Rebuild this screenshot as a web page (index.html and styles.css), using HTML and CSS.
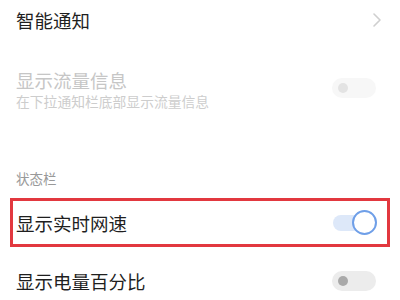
FILE: index.html
```html
<!DOCTYPE html>
<html>
<head>
<meta charset="utf-8">
<link rel="stylesheet" href="styles.css">
</head>
<body>
<div class="page">
  <div class="row row-nav">
    <span class="title">智能通知</span>
    <svg class="chevron" width="10" height="16" viewBox="0 0 10 16"><path d="M2 2 L8 8 L2 14" fill="none" stroke="#cfcfcf" stroke-width="1.6" stroke-linecap="round" stroke-linejoin="round"/></svg>
  </div>
  <div class="row row-disabled">
    <div class="texts">
      <div class="title dim">显示流量信息</div>
      <div class="sub">在下拉通知栏底部显示流量信息</div>
    </div>
    <span class="toggle toggle-disabled"><span class="dot"></span></span>
  </div>
  <div class="section">状态栏</div>
  <div class="highlight">
    <div class="row row-hl">
      <span class="title">显示实时网速</span>
      <span class="toggle-on"><span class="track"></span><span class="knob"></span></span>
    </div>
  </div>
  <div class="row row-last">
    <span class="title">显示电量百分比</span>
    <span class="toggle"><span class="dot"></span></span>
  </div>
</div>
</body>
</html>
```
FILE: styles.css
```css
html, body {
  margin: 0;
  padding: 0;
  background: #ffffff;
}
.page {
  width: 400px;
  height: 300px;
  overflow: hidden;
  font-family: "Noto Sans CJK SC", "Noto Sans", sans-serif;
}
.row {
  display: flex;
  align-items: center;
  justify-content: space-between;
  padding: 0 24px 0 16px;
}
.title {
  font-size: 18.5px;
  line-height: 24px;
  color: #1f1f1f;
}
.title.dim {
  color: #c6c6c6;
}
.row-nav {
  height: 40px;
  padding-right: 18px;
}
.row-disabled {
  padding-top: 28px;
  align-items: flex-start;
}
.row-disabled .toggle {
  margin-top: 10px;
}
.sub {
  font-size: 13.8px;
  line-height: 18px;
  color: #cdcdcd;
}
.section {
  margin-top: 59px;
  padding-left: 16px;
  font-size: 13.5px;
  line-height: 18px;
  color: #999999;
}
.highlight {
  margin: 11px 10px 0 10px;
  height: 43px;
  border: 3px solid #e2383f;
}
.row-hl {
  height: 43px;
  padding: 0 10px 0 3px;
}
.row-last {
  height: 68px;
}
.toggle {
  position: relative;
  width: 44px;
  height: 20px;
  border-radius: 10px;
  background: #ececec;
}
.toggle-disabled {
  background: #f7f7f7;
}
.toggle .dot {
  position: absolute;
  left: 6px;
  top: 5px;
  width: 10px;
  height: 10px;
  border-radius: 50%;
  background: #a9a9a9;
}
.toggle-disabled .dot {
  background: #e3e3e3;
}
.toggle-on {
  position: relative;
  width: 44px;
  height: 26px;
}
.toggle-on .track {
  position: absolute;
  left: 0;
  top: 5px;
  width: 36px;
  height: 16px;
  border-radius: 8px;
  background: #dde8f9;
}
.toggle-on .knob {
  position: absolute;
  right: 0;
  top: 0;
  width: 21px;
  height: 21px;
  border-radius: 50%;
  background: #ffffff;
  border: 2.5px solid #6f9fe8;
}
```
